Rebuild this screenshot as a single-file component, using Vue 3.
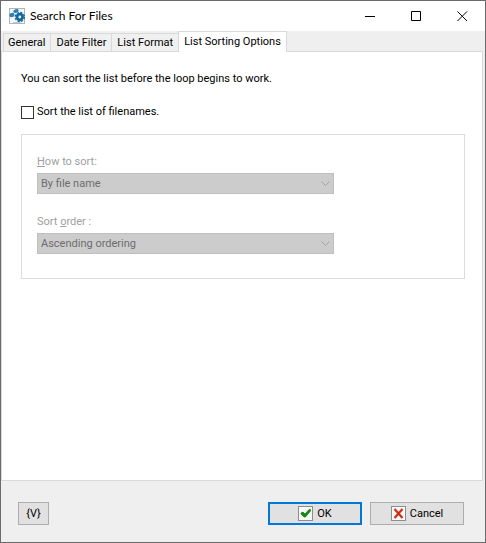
<template>
  <div class="window">
    <header class="title-bar">
      <svg class="app-icon" width="16" height="16" viewBox="0 0 16 16">
        <rect x="0.5" y="0.5" width="15" height="15" fill="#f6f8f9" stroke="#b4b4b4" />
        <path d="M4 14.5h8" stroke="#a9cfe0" />
        <circle cx="10.8" cy="9" r="4.2" fill="#14699b" />
        <circle cx="10.8" cy="9" r="4.6" fill="none" stroke="#14699b" stroke-width="1.2" stroke-dasharray="2.2 1.4" />
        <circle cx="10.8" cy="9" r="1.4" fill="#e3f0f6" />
        <ellipse cx="7" cy="3" rx="2.8" ry="1.9" transform="rotate(-20 7 3)" fill="#2d83ad" />
        <ellipse cx="2.9" cy="7" rx="2.6" ry="2.1" transform="rotate(-20 2.9 7)" fill="#2d83ad" />
      </svg>
      <h1>Search For Files</h1>
      <div class="window-buttons">
        <button type="button" aria-label="Minimize">
          <svg width="11" height="11" viewBox="0 0 11 11"><path d="M0 5.5h10" /></svg>
        </button>
        <button type="button" aria-label="Maximize">
          <svg width="11" height="11" viewBox="0 0 11 11"><path d="M0.5 0.5h9v9h-9z" /></svg>
        </button>
        <button type="button" aria-label="Close">
          <svg width="11" height="11" viewBox="0 0 11 11"><path d="M0.5 0.5l9.5 9.5M10 0.5l-9.5 9.5" /></svg>
        </button>
      </div>
    </header>

    <nav class="tabs" role="tablist">
      <button v-for="tab in tabs" :key="tab" type="button" role="tab" class="tab" :class="{ active: tab === activeTab }"
        :aria-selected="tab === activeTab" @click="activeTab = tab">{{ tab }}</button>
    </nav>

    <main class="page">
      <p class="hint">You can sort the list before the loop begins to work.</p>
      <div class="check">
        <input id="sort-enabled" v-model="sortEnabled" type="checkbox" />
        <label for="sort-enabled">Sort the list of filenames.</label>
      </div>

      <div class="group" :class="{ disabled: !sortEnabled }">
        <div class="field">
          <label for="sort-by"><u>H</u>ow to sort:</label>
          <div class="select-box">
            <select id="sort-by" v-model="sortBy" :disabled="!sortEnabled">
              <option>By file name</option>
            </select>
            <svg class="chevron" width="9" height="6" viewBox="0 0 9 6"><path d="M0.5 0.5l4 4l4-4" /></svg>
          </div>
        </div>
        <div class="field">
          <label for="sort-order">Sort <u>o</u>rder :</label>
          <div class="select-box">
            <select id="sort-order" v-model="sortOrder" :disabled="!sortEnabled">
              <option>Ascending ordering</option>
            </select>
            <svg class="chevron" width="9" height="6" viewBox="0 0 9 6"><path d="M0.5 0.5l4 4l4-4" /></svg>
          </div>
        </div>
      </div>
    </main>

    <footer class="footer">
      <button type="button" class="btn variables">{V}</button>
      <button type="button" class="btn wide primary">
        <svg width="15" height="15" viewBox="0 0 15 15">
          <rect x="0.5" y="0.5" width="14" height="14" fill="#f8f8f8" stroke="#8d8d8d" />
          <path d="M3 7l2-1l2 2l4-4.5h1.5v1.5l-5 6h-1.5l-3-3z" fill="#109010" stroke="#086008" stroke-width="0.6" />
        </svg>
        <span>OK</span>
      </button>
      <button type="button" class="btn wide">
        <svg width="15" height="15" viewBox="0 0 15 15">
          <rect x="0.5" y="0.5" width="14" height="14" fill="#f8f8f8" stroke="#8d8d8d" />
          <path d="M3.5 3l8 9M11.5 3l-8 9" fill="none" stroke="#d42a14" stroke-width="2.2" />
        </svg>
        <span>Cancel</span>
      </button>
    </footer>
  </div>
</template>

<script setup>
import { ref } from 'vue';

const tabs = ['General', 'Date Filter', 'List Format', 'List Sorting Options'];
const activeTab = ref('List Sorting Options');

const sortEnabled = ref(false);
const sortBy = ref('By file name');
const sortOrder = ref('Ascending ordering');
</script>

<style>
body {
  margin: 0;
}
</style>

<style scoped>
.window {
  display: flex;
  flex-direction: column;
  box-sizing: border-box;
  min-height: 100vh;
  border: 1px solid #6b6b6b;
  background: #efefef;
  color: #000;
  font-family: Tahoma, Roboto, sans-serif;
  font-size: 11px;
  line-height: 16px;
}

button,
select {
  font: inherit;
  color: inherit;
}

svg {
  display: block;
  flex: none;
}

.title-bar {
  display: flex;
  align-items: center;
  height: 30px;
  padding-left: 8px;
  background: #fff;
}

h1 {
  flex: 1;
  margin: 0 0 0 5px;
  font-family: "Segoe UI", Lato, sans-serif;
  font-size: 12px;
  font-weight: 400;
  line-height: 16px;
}

.window-buttons {
  display: flex;
}

.window-buttons button {
  display: flex;
  align-items: center;
  justify-content: center;
  width: 46px;
  height: 30px;
  padding: 0;
  border: none;
  background: none;
}

.window-buttons path {
  fill: none;
  stroke: #000;
}

.tabs {
  display: flex;
  align-items: flex-end;
  height: 20px;
  padding-left: 2px;
}

.tab {
  height: 18px;
  padding: 1px 5px 0;
  border: 1px solid #d9d9d9;
  border-width: 1px 1px 0 0;
  background: #f0f0f0;
  white-space: nowrap;
}

.tab:first-child {
  padding-left: 4px;
  border-left-width: 1px;
}

.tab.active {
  position: relative;
  height: 21px;
  margin: 0 0 -1px -1px;
  padding: 0 5px 1px;
  border-left-width: 1px;
  background: #fff;
}

.page {
  flex: 1;
  margin-right: 2px;
  padding: 19px 17px 0 19px;
  border: 1px solid #d9d9d9;
  background: #fff;
}

.hint {
  margin: 0 0 17px;
}

.check {
  display: flex;
  align-items: center;
  gap: 3px;
}

.check input {
  appearance: none;
  width: 13px;
  height: 13px;
  margin: 0;
  border: 1px solid #333;
  background: #fff;
}

.check input:checked {
  background: #333;
}

.group {
  display: flex;
  flex-direction: column;
  gap: 20px;
  margin-top: 14px;
  padding: 19px 15px 24px;
  border: 1px solid #dcdcdc;
}

.field {
  display: flex;
  flex-direction: column;
  gap: 3px;
}

.disabled label {
  color: #a0a0a0;
}

.select-box {
  position: relative;
  max-width: 297px;
}

select {
  appearance: none;
  display: block;
  box-sizing: border-box;
  width: 100%;
  height: 21px;
  padding: 1px 20px 0 3px;
  border: 1px solid #adadad;
  border-radius: 0;
  background: #fff;
}

select:disabled {
  border-color: #bfbfbf;
  background: #ccc;
  color: #6d6d6d;
  opacity: 1;
}

.chevron {
  position: absolute;
  top: 8px;
  right: 4px;
  pointer-events: none;
}

.chevron path {
  fill: none;
  stroke: #a3a3a3;
}

.footer {
  display: flex;
  gap: 8px;
  padding: 21px 21px 17px 17px;
}

.btn {
  display: flex;
  align-items: center;
  justify-content: center;
  gap: 4px;
  box-sizing: border-box;
  height: 23px;
  padding: 0;
  border: 1px solid #adadad;
  background: #e1e1e1;
}

.variables {
  width: 31px;
  margin-right: auto;
}

.wide {
  width: 94px;
}

.primary {
  border: 2px solid #0078d7;
}
</style>
